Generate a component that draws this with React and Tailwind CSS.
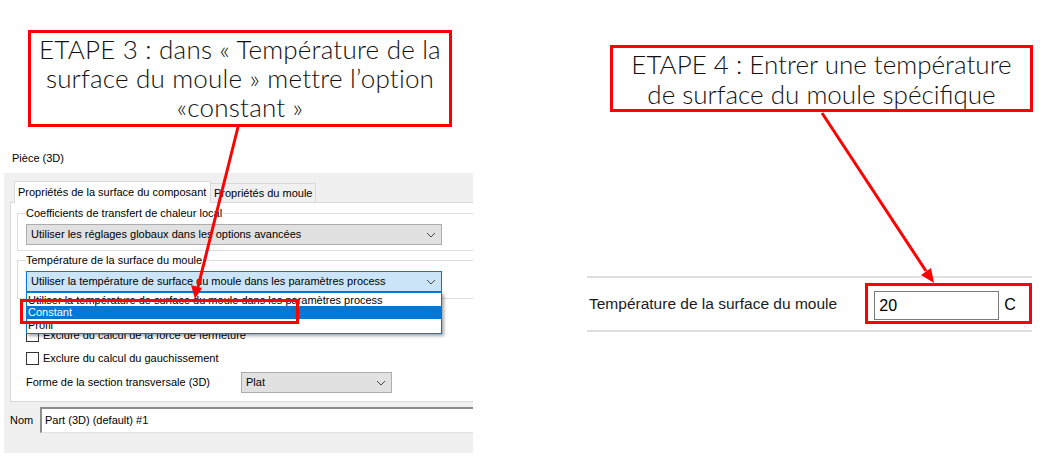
import React from "react";

const ui = { fontFamily: '"Liberation Sans", Arial, sans-serif' };
const callout = { fontFamily: 'Lato, "Open Sans", sans-serif' };

function Chevron() {
  return (
    <svg width="10" height="6" viewBox="0 0 10 6" className="shrink-0">
      <polyline points="1,1 5,5 9,1" fill="none" stroke="#444" strokeWidth="1" />
    </svg>
  );
}

function Select({ children, width, focused, className = "" }) {
  return (
    <div
      className={`flex items-center justify-between h-[21px] pl-[4px] pr-[5px] border text-[11px] text-black ${
        focused ? "bg-[#cce4f7] border-[#0078d7]" : "bg-[#e1e1e1] border-[#adadad]"
      } ${className}`}
      style={{ width }}
    >
      <span className="truncate">{children}</span>
      <Chevron />
    </div>
  );
}

function Checkbox({ label }) {
  return (
    <div className="flex items-center h-[13px] ml-[15px] gap-[4px]">
      <div className="w-[13px] h-[13px] border border-[#333] bg-white" />
      <span className="text-[11px] leading-[13px]">{label}</span>
    </div>
  );
}

function Arrows() {
  return (
    <svg className="absolute inset-0 pointer-events-none" width="1047" height="474">
      <line x1="238" y1="127" x2="198" y2="287" stroke="#ff0000" strokeWidth="3" />
      <polygon points="195,299 191,285 202,288" fill="#ff0000" />
      <line x1="822" y1="113" x2="926" y2="271" stroke="#ff0000" strokeWidth="3" />
      <polygon points="934,283 921,275 931,268" fill="#ff0000" />
    </svg>
  );
}

export default function App() {
  return (
    <div className="relative w-[1047px] h-[474px] bg-white overflow-hidden flex" style={ui}>
      {/* Left: step 3 */}
      <div className="w-[473px] shrink-0 flex flex-col">
        <div
          className="mt-[30px] ml-[28px] w-[424px] h-[97px] border-[3px] border-[#ff0000] flex items-center justify-center text-center text-[26px] leading-[29px] tracking-[0.2px] font-light text-[#111]"
          style={callout}
        >
          <p>
            ETAPE 3 : dans « Température de la
            <br />
            surface du moule » mettre l’option
            <br />
            «constant »
          </p>
        </div>

        <div className="h-[46px] pt-[24px] pl-[12px] text-[11px] leading-[14px]">Pièce (3D)</div>

        <div className="ml-[4px] w-[469px] h-[280px] bg-[#f0f0f0] flex flex-col">
          {/* tabs */}
          <div className="flex items-end h-[29px] pl-[10px]">
            <div className="relative z-10 -mb-px h-[22px] w-[197px] bg-white border border-b-0 border-[#d9d9d9] pl-[3px] pt-[3px] text-[11px] leading-[14px]">
              Propriétés de la surface du composant
            </div>
            <div className="h-[19px] w-[105px] border border-l-0 border-b-0 border-[#d9d9d9] pl-[3px] pt-[2px] text-[11px] leading-[14px]">
              Propriétés du moule
            </div>
          </div>

          {/* tab content */}
          <div className="ml-[6px] h-[200px] bg-white border-l border-t border-b border-[#d9d9d9] flex flex-col">
            <div className="relative mt-[10px] ml-[6px] h-[38px] border border-r-0 border-[#dcdcdc] pl-[8px] pt-[10px]">
              <span className="absolute -top-[8px] left-[8px] bg-white pr-[1px] text-[11px] leading-[14px]">
                Coefficients de transfert de chaleur local
              </span>
              <Select width={416}>Utiliser les réglages globaux dans les options avancées</Select>
            </div>

            <div className="relative mt-[9px] ml-[6px] h-[39px] border border-r-0 border-[#dcdcdc] pl-[8px] pt-[10px]">
              <span className="absolute -top-[8px] left-[8px] bg-white pr-[1px] text-[11px] leading-[14px]">
                Température de la surface du moule
              </span>
              <Select width={416} focused>
                Utiliser la température de surface du moule dans les paramètres process
              </Select>
            </div>

            <div className="mt-[30px]">
              <Checkbox label="Exclure du calcul de la force de fermeture" />
            </div>
            <div className="mt-[10px]">
              <Checkbox label="Exclure du calcul du gauchissement" />
            </div>

            <div className="mt-[7px] ml-[15px] flex items-center h-[21px]">
              <span className="w-[215px] text-[11px]">Forme de la section transversale (3D)</span>
              <Select width={151}>Plat</Select>
            </div>
          </div>

          {/* Nom */}
          <div className="mt-[5px] flex items-center h-[26px]">
            <span className="w-[36px] pl-[6px] text-[11px]">Nom</span>
            <div className="flex-1 h-[26px] bg-white border-t-2 border-l-2 border-[#8c8c8c] border-b border-b-[#e3e3e3] pl-[3px] flex items-center text-[11px]">
              Part (3D) (default) #1
            </div>
          </div>
        </div>
      </div>

      {/* Right: step 4 */}
      <div className="flex-1 pl-[114px] flex flex-col">
        <div
          className="mt-[45px] ml-[23px] w-[423px] h-[67px] border-[3px] border-[#ff0000] flex items-center justify-center text-center text-[26px] leading-[30px] font-light text-[#111]"
          style={callout}
        >
          <p>
            ETAPE 4 : Entrer une température
            <br />
            de surface du moule spécifique
          </p>
        </div>

        <div className="mt-[164px] w-[445px] h-[56px] border-y-2 border-[#e0e0e0] flex items-start">
          <span className="w-[279px] pl-[2px] pt-[17px] text-[15.5px] leading-[18px] text-[#1a1a1a]">
            Température de la surface du moule
          </span>
          <div className="mt-[5px] w-[167px] h-[41px] border-[3px] border-[#ff0000] flex items-start pl-[6px] pt-[5px]">
            <div className="w-[125px] h-[29px] border border-[#7a7a7a] bg-white pl-[4px] flex items-center text-[16px] text-black">
              20
            </div>
            <span className="ml-[5px] mt-[5px] text-[16px] leading-[18px]">C</span>
          </div>
        </div>
      </div>

      {/* open dropdown list */}
      <div
        className="absolute left-[26px] top-[292px] w-[416px] h-[42px] bg-white border border-[#0078d7] shadow-[2px_2px_3px_rgba(0,0,0,0.35)] flex flex-col text-[11px] leading-[12px]"
      >
        <div className="h-[13px] pl-[1px] pt-[1px]">
          Utiliser la température de surface du moule dans les paramètres process
        </div>
        <div className="h-[13px] pl-[1px] bg-[#0078d7] text-white">Constant</div>
        <div className="h-[13px] pl-[1px]">Profil</div>
      </div>

      {/* highlight around Constant */}
      <div className="absolute left-[20px] top-[299px] w-[279px] h-[25px] border-[3px] border-[#ff0000]" />

      <Arrows />
    </div>
  );
}
